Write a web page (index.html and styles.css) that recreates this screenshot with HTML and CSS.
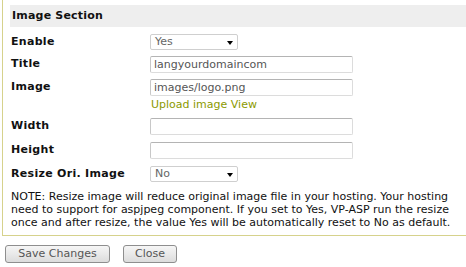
FILE: index.html
```html
<!DOCTYPE html>
<html>
<head>
<meta charset="utf-8">
<link rel="stylesheet" href="styles.css">
</head>
<body>
<div class="panel">
  <div class="section-head">Image Section</div>
  <div class="row row-first">
    <div class="label">Enable</div>
    <div class="field"><div class="select"><span>Yes</span><span class="arrow"></span></div></div>
  </div>
  <div class="row">
    <div class="label">Title</div>
    <div class="field"><div class="input">langyourdomaincom</div></div>
  </div>
  <div class="row">
    <div class="label">Image</div>
    <div class="field">
      <div class="input">images/logo.png</div>
      <div class="links">Upload image View</div>
    </div>
  </div>
  <div class="row row-wide">
    <div class="label">Width</div>
    <div class="field"><div class="input"></div></div>
  </div>
  <div class="row row-wide">
    <div class="label">Height</div>
    <div class="field"><div class="input"></div></div>
  </div>
  <div class="row row-wide">
    <div class="label">Resize Ori. Image</div>
    <div class="field"><div class="select"><span>No</span><span class="arrow"></span></div></div>
  </div>
  <p class="note">NOTE: Resize image will reduce original image file in your hosting. Your hosting need to support for aspjpeg component. If you set to Yes, VP-ASP run the resize once and after resize, the value Yes will be automatically reset to No as default.</p>
</div>
<div class="actions">
  <span class="btn btn-save">Save Changes</span>
  <span class="btn btn-close">Close</span>
</div>
</body>
</html>
```
FILE: styles.css
```css
html, body {
  margin: 0;
  padding: 0;
  background: #fff;
}
body {
  font-family: "DejaVu Sans", Verdana, sans-serif;
  font-size: 11px;
  color: #111;
  width: 466px;
  height: 267px;
  overflow: hidden;
}
.panel {
  margin-left: 2px;
  border-left: 1px solid #d6d28c;
  border-bottom: 1px solid #d6d28c;
  padding: 5px 0 0 7px;
  height: 230px;
  box-sizing: content-box;
}
.section-head {
  background: #eeeeee;
  height: 22px;
  line-height: 22px;
  padding-left: 2px;
  font-weight: bold;
  letter-spacing: 0.2px;
  color: #111;
}
.row {
  display: grid;
  grid-template-columns: 140px 1fr;
  padding-top: 6px;
}
.row-first {
  padding-top: 7px;
}
.row-wide {
  padding-top: 7px;
}
.label {
  font-weight: bold;
  padding-left: 1px;
  line-height: 14px;
  padding-top: 1px;
  letter-spacing: 0.3px;
}
.field {
  display: flex;
  flex-direction: column;
}
.input {
  width: 203px;
  height: 17px;
  box-sizing: border-box;
  border: 1px solid #dcdcdc;
  border-top-color: #b4b4b4;
  border-left-color: #c8c8c8;
  border-radius: 2px;
  color: #555;
  padding-left: 3px;
  line-height: 15px;
}
.select {
  width: 88px;
  height: 16px;
  box-sizing: border-box;
  border: 1px solid #cfcfcf;
  border-radius: 2px;
  color: #666;
  padding-left: 4px;
  line-height: 14px;
  display: flex;
  justify-content: space-between;
  align-items: center;
}
.arrow {
  width: 0;
  height: 0;
  border-left: 3.5px solid transparent;
  border-right: 3.5px solid transparent;
  border-top: 4px solid #000;
  margin-right: 4px;
  margin-top: 2px;
}
.links {
  color: #8c9a00;
  line-height: 13px;
  margin-top: 2px;
  padding-left: 1px;
}
.note {
  margin: 8px 0 0 1px;
  line-height: 13px;
  color: #111;
  width: 450px;
}
.actions {
  display: flex;
  padding: 9px 0 0 5px;
  gap: 13px;
}
.btn {
  display: inline-block;
  height: 18px;
  box-sizing: border-box;
  border: 1px solid #8e8e8e;
  border-radius: 3px;
  background: linear-gradient(#f6f6f6, #dcdcdc);
  color: #555;
  line-height: 16px;
  text-align: center;
}
.btn-save { width: 105px; }
.btn-close { width: 54px; }
```
